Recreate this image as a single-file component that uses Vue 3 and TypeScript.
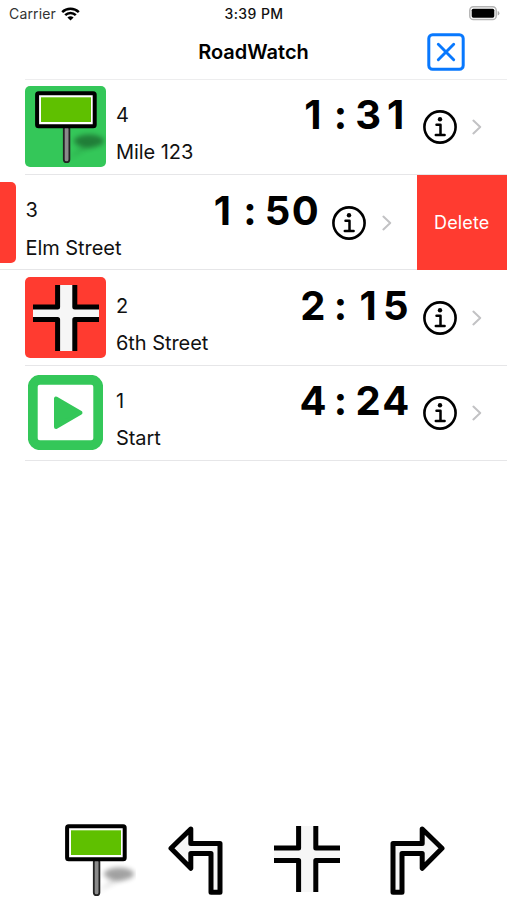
<script setup lang="ts">
type Kind = 'sign' | 'cross' | 'start' | 'plain'

interface Entry {
  index: number
  name: string
  time: string
  kind: Kind
  swiped?: boolean
}

const entries: Entry[] = [
  { index: 4, name: 'Mile 123', time: '1:31', kind: 'sign' },
  { index: 3, name: 'Elm Street', time: '1:50', kind: 'plain', swiped: true },
  { index: 2, name: '6th Street', time: '2:15', kind: 'cross' },
  { index: 1, name: 'Start', time: '4:24', kind: 'start' },
]
</script>

<template>
  <div class="screen">
    <svg class="defs" width="0" height="0" aria-hidden="true">
      <defs>
        <filter id="soft" x="-50%" y="-50%" width="200%" height="200%">
          <feGaussianBlur stdDeviation="2.8" />
        </filter>
        <symbol id="sign" viewBox="0 0 81 81">
          <ellipse cx="64" cy="55" rx="15" ry="6.5" fill="#000" opacity=".36" filter="url(#soft)" />
          <path d="M43 73L58 58L70 60Z" fill="#000" opacity=".1" filter="url(#soft)" />
          <rect x="38.8" y="40" width="5.6" height="36.2" rx="2.8" fill="#8a8a8a" stroke="#222" stroke-width="1.8" />
          <rect x="12.1" y="7.3" width="57.6" height="33" rx="1.5" fill="#fff" stroke="#000" stroke-width="4" />
          <rect x="16" y="11.3" width="50" height="24.7" fill="#5fc000" />
        </symbol>
        <symbol id="cross" viewBox="0 0 66 66">
          <path d="M24.6 0H41.8V22H66V34.4H41.8V66H24.6V34.4H0V22H24.6Z" fill="#f6f6f6" />
          <path d="M24.6 0V22H0M41.8 0V22H66M24.6 66V34.4H0M41.8 66V34.4H66" fill="none" stroke="#000" stroke-width="5" stroke-linejoin="round" />
        </symbol>
        <symbol id="turn" viewBox="0 0 55 69">
          <path d="M22.8 3L3 22.3L22.8 42.3V27.4H43V66.3H52V17.6H22.8Z" fill="#f6f6f6" stroke="#000" stroke-width="5" stroke-linejoin="round" />
        </symbol>
      </defs>
    </svg>

    <header class="status">
      <div class="carrier">
        <span class="carrier-name">Carrier</span>
        <svg width="19" height="14" viewBox="0 0 19 14">
          <path d="M1.2 5.1C5.8 .6 13.2 .6 17.8 5.1M4.2 8.2C7.1 5.3 11.9 5.3 14.8 8.2" fill="none" stroke="#000" stroke-width="2.5" />
          <path d="M6.4 10.5Q9.5 8 12.6 10.5L9.5 13.6Z" />
        </svg>
      </div>
      <span class="clock">3:39 PM</span>
      <svg class="battery" width="31" height="15" viewBox="0 0 31 15">
        <rect x=".8" y=".8" width="26.4" height="12.8" rx="3.6" fill="#fff" stroke="#b4b4b4" stroke-width="1.5" />
        <rect x="2.7" y="2.7" width="22.6" height="9" rx="1.6" />
        <path d="M28.7 5V9.6Q30.4 9 30.4 7.3T28.7 5Z" fill="#aaa" />
      </svg>
    </header>

    <nav class="titlebar">
      <h1>RoadWatch</h1>
      <button class="close" aria-label="Close">
        <svg width="38" height="38" viewBox="0 0 38 38" fill="none" stroke="#0878fe" stroke-linecap="round">
          <rect x="1.8" y="1.8" width="34.4" height="34.4" rx="3.8" stroke-width="3" />
          <path d="M11.3 11.3L26.7 26.7M26.7 11.3L11.3 26.7" stroke-width="2.9" />
        </svg>
      </button>
    </nav>

    <ul class="list">
      <li v-for="e in entries" :key="e.index" class="row" :class="{ swiped: e.swiped }">
        <div class="content">
          <div class="tile" :class="e.kind">
            <svg v-if="e.kind === 'sign'" width="81" height="81"><use href="#sign" /></svg>
            <svg v-else-if="e.kind === 'cross'" width="66" height="66"><use href="#cross" /></svg>
            <svg v-else-if="e.kind === 'start'" width="75" height="75" viewBox="0 0 75 75">
              <rect x="4.8" y="4.8" width="65.4" height="65.4" rx="7" fill="#fff" stroke="#34c759" stroke-width="9.8" />
              <path d="M28 23.6V52L52.5 37.8Z" fill="#34c759" stroke="#34c759" stroke-width="4" stroke-linejoin="round" />
            </svg>
          </div>
          <div class="labels">
            <span>{{ e.index }}</span>
            <span>{{ e.name }}</span>
          </div>
          <div class="time">
            <span v-for="(c, i) in e.time" :key="i" class="digit">{{ c }}</span>
          </div>
          <svg class="info" width="34" height="34" viewBox="0 0 34 34">
            <circle cx="17" cy="17" r="15.6" fill="none" stroke="#000" stroke-width="2.6" />
            <circle cx="17" cy="9.2" r="2.2" />
            <path d="M13.5 14.8H17.5V25M12.8 25.1H21.6" fill="none" stroke="#000" stroke-width="2.5" stroke-linecap="round" stroke-linejoin="round" />
          </svg>
          <svg class="chevron" width="10" height="16" viewBox="0 0 10 16">
            <path d="M1.4 1.6L8.2 8L1.4 14.4" fill="none" stroke="#c2c2c4" stroke-width="2" stroke-linecap="round" stroke-linejoin="round" />
          </svg>
        </div>
        <button v-if="e.swiped" class="delete">Delete</button>
      </li>
    </ul>

    <footer class="tools">
      <svg class="tool-sign" width="81" height="81"><use href="#sign" /></svg>
      <svg class="tool-left" width="55" height="69"><use href="#turn" /></svg>
      <svg class="tool-cross" width="66" height="66"><use href="#cross" /></svg>
      <svg class="tool-right" width="55" height="69"><use href="#turn" /></svg>
    </footer>
  </div>
</template>

<style>
body {
  background: #fff;
  overflow: hidden;
}
</style>

<style scoped>
.screen {
  width: 507px;
  height: 900px;
  display: flex;
  flex-direction: column;
  background: #fff;
  color: #000;
  font-family: Inter, "Liberation Sans", sans-serif;
  overflow: hidden;
}
.defs {
  display: block;
  flex: none;
}
button {
  border: 0;
  padding: 0;
  background: none;
  font-family: inherit;
}
.status {
  height: 27px;
  flex: none;
  box-sizing: border-box;
  padding: 0 7px 0 9px;
  display: grid;
  grid-template-columns: 1fr auto 1fr;
  align-items: center;
  font-size: 14px;
}
.carrier {
  display: flex;
  align-items: center;
  gap: 5px;
  color: #333;
  letter-spacing: 0.15px;
}
.clock {
  font-weight: 500;
  font-size: 14px;
  letter-spacing: 0.4px;
  margin-right: 1px;
  color: #111;
}
.battery {
  justify-self: end;
}
.titlebar {
  height: 52px;
  flex: none;
  box-sizing: border-box;
  padding-bottom: 2px;
  display: grid;
  grid-template-columns: 1fr auto 1fr;
  align-items: center;
}
h1 {
  margin: 0;
  grid-column: 2;
  font-size: 20px;
  font-weight: 600;
  line-height: 24px;
}
.close {
  justify-self: end;
  width: 38px;
  height: 38px;
  margin-right: 42px;
}
.close svg {
  display: block;
}
.list {
  list-style: none;
  margin: 0;
  padding: 0.7px 0 0;
  background: linear-gradient(#ededee, #ededee) 25px 0 / 482px 1px no-repeat;
}
.row {
  display: flex;
  height: 95.33px;
  padding-left: 25px;
  overflow: hidden;
}
.content {
  display: flex;
  flex: none;
  width: 482px;
  box-sizing: border-box;
  border-bottom: 1px solid #e6e6e8;
  padding-top: 6.7px;
}
.swiped {
  padding-left: 0;
}
.swiped .content {
  width: 507px;
  padding-left: 25px;
  margin-left: -90.5px;
}
.tile {
  width: 81px;
  height: 81px;
  flex: none;
  display: grid;
  place-items: center;
  border-radius: 5px;
  margin-right: 10px;
}
.tile.sign {
  background: #34c759;
}
.tile.cross,
.tile.plain {
  background: #ff3b30;
}
.labels {
  display: flex;
  flex-direction: column;
  flex: 1;
  padding-top: 10.5px;
  font-size: 20px;
  line-height: 37.5px;
  letter-spacing: -0.05px;
  color: #111;
}
.time {
  display: flex;
  padding-top: 7px;
  font-size: 40px;
  font-weight: 700;
  line-height: 44px;
}
.digit {
  width: 27.6px;
  text-align: center;
}
.info {
  margin: 24px 15.5px 0 13px;
  flex: none;
}
.chevron {
  margin: 33px 25px 0 0;
  flex: none;
}
.delete {
  flex: none;
  width: 90.5px;
  background: #ff3b30;
  color: #fff;
  font-size: 18px;
  letter-spacing: 0.15px;
}
.tools {
  margin-top: auto;
  height: 81px;
  display: flex;
  align-items: flex-start;
  padding-left: 55px;
}
.tool-left {
  margin: 7px 0 0 31.5px;
}
.tool-cross {
  margin: 7px 0 0 51px;
}
.tool-right {
  margin: 7px 0 0 50.5px;
  transform: scaleX(-1);
}
</style>
